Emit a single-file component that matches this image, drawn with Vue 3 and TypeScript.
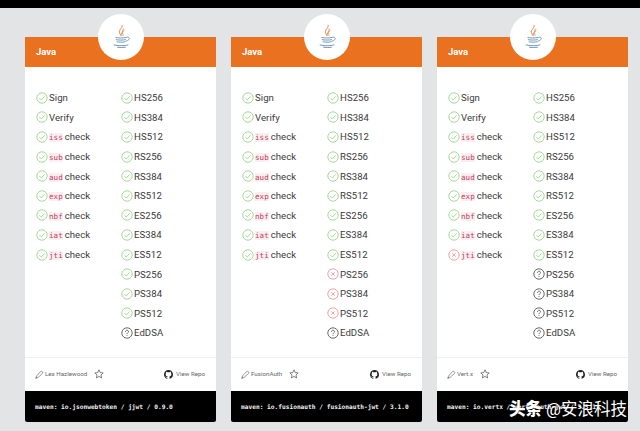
<script setup lang="ts">
type Status = 'ok' | 'bad' | 'unknown'
interface Item { label: string; code?: string; status: Status }
interface Lib { author: string; maven: string; left: Status[]; right: Status[] }

const leftNames = ['Sign', 'Verify', 'iss', 'sub', 'aud', 'exp', 'nbf', 'iat', 'jti']
const rightNames = ['HS256', 'HS384', 'HS512', 'RS256', 'RS384', 'RS512', 'ES256', 'ES384', 'ES512', 'PS256', 'PS384', 'PS512', 'EdDSA']
const fill = (n: number, s: Status): Status[] => Array(n).fill(s)

const libs: Lib[] = [
  { author: 'Les Hazlewood', maven: 'maven: io.jsonwebtoken / jjwt / 0.9.0', left: fill(9, 'ok'), right: [...fill(12, 'ok'), 'unknown'] },
  { author: 'FusionAuth', maven: 'maven: io.fusionauth / fusionauth-jwt / 3.1.0', left: fill(9, 'ok'), right: [...fill(9, 'ok'), ...fill(3, 'bad'), 'unknown'] },
  { author: 'Vert.x', maven: 'maven: io.vertx / vertx-auth-jwt / 3.5.1', left: [...fill(8, 'ok'), 'bad'], right: [...fill(9, 'ok'), ...fill(4, 'unknown')] },
]

function leftItems(l: Lib): Item[] {
  return leftNames.map((n, i) => (i < 2 ? { label: n, status: l.left[i] } : { label: 'check', code: n, status: l.left[i] }))
}
function rightItems(l: Lib): Item[] {
  return rightNames.map((n, i) => ({ label: n, status: l.right[i] }))
}
</script>

<template>
  <div class="page">
    <div class="topbar"></div>
    <div class="cards">
      <section v-for="lib in libs" :key="lib.author" class="card">
        <header class="head">
          <span class="lang">Java</span>
          <div class="logo">
            <svg width="21" height="26" viewBox="0 0 24 30" fill="none">
              <path d="M12.500 1C14 4 9.500 6 9.500 9c0 1.500 1 3 2 4.500C10.800 11 14.500 9 14 5.500" stroke="#d9844a" stroke-width="1.100" />
              <path d="M15.500 7C13.500 8.500 12.500 10 13.500 11.500c.5.800.5 1.500 0 2.500" stroke="#e59a66" stroke-width="1" />
              <path d="M5 15.500c3 .8 9 .8 12.500 0M5.500 18c3 .7 8.500.7 11.500 0M6.500 20.500c3 .6 7.500.6 10 0" stroke="#5f8aa8" stroke-width="1" />
              <path d="M17.500 15.500c3-1 4.500 1 3 2.500-1 1-2.500 1.500-4 2" stroke="#5f8aa8" stroke-width=".9" />
              <path d="M3 24c4 1.400 13 1.400 17 0M7 26.800c3 .5 7 .5 10 0" stroke="#5f8aa8" stroke-width="1" />
            </svg>
          </div>
        </header>
        <div class="features">
          <ul class="col">
            <li v-for="it in leftItems(lib)" :key="it.code ?? it.label" class="row">
              <svg class="ic" :class="it.status" viewBox="0 0 12 12" fill="none">
                <circle cx="6" cy="6" r="5.200" />
                <path v-if="it.status === 'ok'" d="M3.500 6.200l1.800 1.800 3.300-3.600" />
                <path v-else d="M4.300 4.300l3.400 3.400M7.700 4.300l-3.400 3.400" />
              </svg>
              <span><code v-if="it.code" class="code">{{ it.code }}</code>{{ it.label }}</span>
            </li>
          </ul>
          <ul class="col">
            <li v-for="it in rightItems(lib)" :key="it.label" class="row">
              <svg class="ic" :class="it.status" viewBox="0 0 12 12" fill="none">
                <circle cx="6" cy="6" r="5.200" />
                <path v-if="it.status === 'ok'" d="M3.500 6.200l1.800 1.800 3.300-3.600" />
                <path v-else-if="it.status === 'bad'" d="M4.300 4.300l3.400 3.400M7.700 4.300l-3.400 3.400" />
                <template v-else>
                  <path d="M4.500 4.800c0-2 3-2 3-.2 0 1.200-1.500 1.200-1.500 2.500" />
                  <path d="M6 8.200v.8" />
                </template>
              </svg>
              <span>{{ it.label }}</span>
            </li>
          </ul>
        </div>
        <footer class="foot">
          <svg class="pen" viewBox="0 0 12 12" fill="none">
            <path d="M1 11l1-3 5-5.500c1-1 2-1 2.800-.2s.8 1.700-.2 2.700L4 10z M1 11l2-1.500" />
          </svg>
          <span class="author">{{ lib.author }}</span>
          <svg class="star" viewBox="0 0 12 12" fill="none">
            <path d="M6 1l1.500 3.300 3.500.4-2.600 2.400.7 3.600L6 8.900l-3.100 1.800.7-3.600L1 4.700l3.500-.4z" />
          </svg>
          <span class="spacer"></span>
          <svg class="gh" viewBox="0 0 16 16" fill="#222">
            <path d="M8 0C3.580 0 0 3.580 0 8c0 3.540 2.290 6.530 5.470 7.590.4.070.55-.17.55-.38 0-.19-.01-.82-.01-1.490-2.010.37-2.530-.49-2.690-.94-.09-.23-.48-.94-.82-1.130-.28-.15-.68-.52-.01-.53.63-.01 1.080.58 1.230.82.720 1.210 1.870.870 2.330.660.070-.520.280-.870.510-1.070-1.780-.2-3.640-.890-3.640-3.950 0-.870.310-1.590.820-2.150-.080-.2-.360-1.020.080-2.120 0 0 .670-.210 2.200.820a7.500 7.500 0 0 1 4 0c1.530-1.040 2.200-.820 2.200-.820.440 1.100.160 1.920.080 2.120.510.560.820 1.270.820 2.150 0 3.070-1.870 3.750-3.650 3.950.290.250.540.730.540 1.480 0 1.070-.010 1.930-.010 2.200 0 .210.150.460.550.380A8.010 8.010 0 0 0 16 8c0-4.420-3.580-8-8-8z" />
          </svg>
          <span class="repo">View Repo</span>
        </footer>
        <div class="maven">{{ lib.maven }}</div>
      </section>
    </div>
    <div class="watermark"><b>头条</b> @安浪科技</div>
  </div>
</template>

<style>
html, body { margin: 0; background: #e3e4e6; }
</style>

<style scoped>
.page {
  position: relative;
  width: 640px;
  height: 431px;
  overflow: hidden;
  background: #e3e4e6;
  font-family: Roboto, "Noto Sans CJK SC", sans-serif;
  color: #3a3a3a;
}
.topbar { height: 8px; background: #000; }
.cards { display: flex; gap: 15px; padding: 29px 0 0 25px; }
.card {
  width: 191px;
  height: 385px;
  display: flex;
  flex-direction: column;
  background: #fff;
  border-radius: 2px;
}
.head {
  position: relative;
  height: 30px;
  flex: none;
  background: #e9711f;
  display: flex;
  align-items: center;
  padding-left: 11px;
}
.lang { color: #fff; font-size: 9.500px; font-weight: 700; margin-top: -1px; }
.logo {
  position: absolute;
  left: 73px;
  top: -23px;
  width: 46px;
  height: 46px;
  border-radius: 50%;
  background: #fff;
  display: flex;
  align-items: center;
  justify-content: center;
}
.features {
  flex: 1;
  display: grid;
  grid-template-columns: 85px 1fr;
  padding: 21px 0 0 11px;
  border-bottom: 1px solid #efefef;
}
.col { list-style: none; margin: 0; padding: 0; }
.row {
  height: 19.600px;
  display: flex;
  align-items: center;
  gap: 1px;
  font-size: 9.600px;
  letter-spacing: .05px;
  white-space: pre;
}
.ic { width: 12px; height: 12px; flex: none; stroke-width: .8; }
.ic.ok { stroke: #8fcf80; }
.ic.bad { stroke: #ec8b95; }
.ic.unknown { stroke: #444; }
.code {
  font-family: "DejaVu Sans Mono", monospace;
  font-size: 7.500px;
  color: #c2395a;
  background: #fbeef1;
  margin-right: 2px;
}
.foot {
  height: 32px;
  margin-bottom: 1px;
  flex: none;
  display: flex;
  align-items: center;
  padding: 0 11px 0 10px;
  font-size: 6.200px;
  color: #666;
}
.pen { width: 9px; height: 9px; stroke: #555; stroke-width: .8; margin-right: 1px; }
.star { width: 10px; height: 10px; stroke: #444; stroke-width: .8; margin-left: 7px; }
.spacer { flex: 1; }
.gh { width: 9px; height: 9px; margin-right: 3px; }
.maven {
  height: 31px;
  flex: none;
  background: #000;
  color: #f2f2f2;
  display: flex;
  align-items: center;
  padding-left: 10px;
  font-family: "DejaVu Sans Mono", monospace;
  font-size: 6.200px;
  font-weight: 700;
  white-space: nowrap;
  overflow: hidden;
  border-radius: 0 0 2px 2px;
}
.watermark {
  position: absolute;
  left: 509px;
  top: 400px;
  color: #fff;
  font-size: 16.500px;
  line-height: 20px;
  white-space: nowrap;
}
.watermark b { font-weight: 900; }
</style>
